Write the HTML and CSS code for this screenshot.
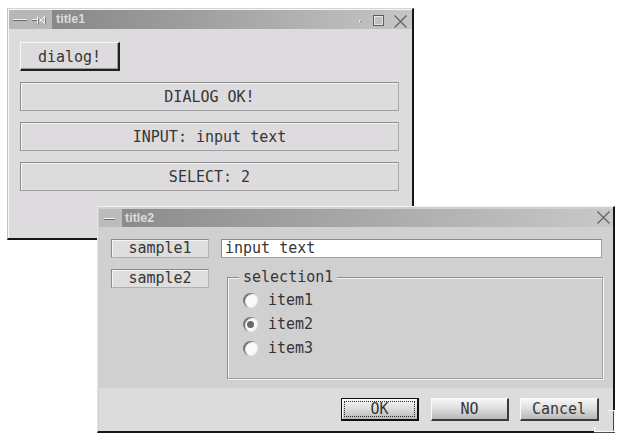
FILE: index.html
```html
<!DOCTYPE html>
<html>
<head>
<meta charset="utf-8">
<link rel="stylesheet" href="styles.css">
</head>
<body>
<div class="desk">
  <div class="win win1">
    <div class="titlebar">
      <div class="tb-icons tb-icons1">
        <svg width="43" height="19" viewBox="0 0 43 19">
          <path d="M4 10.5H18M23 10.5H28" stroke="#6a6a6a" stroke-width="1"/>
          <path d="M4 9.5H18M23 9.5H28" stroke="#f4f4f4" stroke-width="1"/>
          <path d="M28.5 6.5V13.5M35.5 6.5V13.5M28.5 6.5L35.5 13.5M28.5 13.5L35.5 6.5" stroke="#f2f2f2" stroke-width="1" fill="none"/>
          <path d="M29.5 7.5V14.5M36.5 7.5V14.5" stroke="#7a7a7a" stroke-width="1"/>
        </svg>
      </div>
      <div class="tb-title">
        <span class="tb-text">title1</span>
        <svg class="tb-right" width="56" height="19" viewBox="0 0 56 19">
          <rect x="3" y="10" width="2" height="2" fill="#f4f4f4"/>
          <rect x="4" y="11" width="1" height="1" fill="#666"/>
          <rect x="17.5" y="5.5" width="10" height="10" fill="none" stroke="#5c5c5c"/>
          <rect x="18.5" y="6.5" width="8" height="8" fill="none" stroke="#e6e6e6"/>
          <path d="M38.5 5.5L50.5 17.5M50.5 5.5L38.5 17.5" stroke="#5e5e5e" stroke-width="1.1"/>
        </svg>
      </div>
    </div>
    <div class="body1">
      <div class="btn-row"><div class="btn-raised">dialog!</div></div>
      <div class="label-box">DIALOG OK!</div>
      <div class="label-box">INPUT: input text</div>
      <div class="label-box">SELECT: 2</div>
    </div>
  </div>

  <div class="win win2">
    <div class="titlebar titlebar2">
      <div class="tb-icons tb-icons2">
        <svg width="23" height="18" viewBox="0 0 23 18">
          <path d="M5 10.5H16" stroke="#6a6a6a" stroke-width="1"/>
          <path d="M5 9.5H16" stroke="#f4f4f4" stroke-width="1"/>
        </svg>
      </div>
      <div class="tb-title tb-title2">
        <span class="tb-text">title2</span>
        <svg class="tb-right" width="20" height="18" viewBox="0 0 20 18">
          <path d="M4.5 2.5L16.5 14.5M16.5 2.5L4.5 14.5" stroke="#5e5e5e" stroke-width="1.1"/>
        </svg>
      </div>
    </div>
    <div class="main2">
      <div class="grid2">
        <div class="sample-btn">sample1</div>
        <div class="text-input">input text</div>
        <div class="sample-btn">sample2</div>
        <fieldset class="group">
          <legend class="group-label">selection1</legend>
          <div class="radio-row"><span class="radio"></span><span>item1</span></div>
          <div class="radio-row"><span class="radio checked"></span><span>item2</span></div>
          <div class="radio-row"><span class="radio"></span><span>item3</span></div>
        </fieldset>
      </div>
    </div>
    <div class="actions">
      <div class="push-btn default"><span class="focus">OK</span></div>
      <div class="push-btn">NO</div>
      <div class="push-btn cancel">Cancel</div>
    </div>
    <svg class="grip" width="22" height="24" viewBox="0 0 22 24">
      <path d="M14 0.5H20.5V21.5H0.5V17" stroke="#f8f8f8" stroke-width="1.4" fill="none"/>
    </svg>
  </div>
</div>
</body>
</html>
```

FILE: styles.css
```css
html, body {
  margin: 0;
  padding: 0;
  background: #ffffff;
}

.desk {
  position: relative;
  width: 627px;
  height: 444px;
  overflow: hidden;
  font-family: "DejaVu Sans Mono", "Liberation Mono", monospace;
  font-size: 15px;
  color: #363636;
}

.win {
  position: absolute;
  box-sizing: border-box;
  display: flex;
  flex-direction: column;
  border-right: 2px solid #161616;
  border-bottom: 2px solid #161616;
}

.win1 {
  left: 7px;
  top: 8px;
  width: 407px;
  height: 232px;
  padding: 1px 0 0 1px;
  border-left: 1px solid #c2c2c2;
  border-top: 1px solid #d4d4d4;
  background: #dddbdd;
  box-shadow: inset 1px 1px 0 #f6f6f6;
}

.win2 {
  left: 97px;
  top: 206px;
  width: 518px;
  height: 227px;
  padding: 2px 0 0 1px;
  border-left: 1px solid #e6e6e6;
  border-top: 1px solid #f0f0f0;
  background: #d0d0d0;
}

.titlebar {
  display: flex;
  height: 19px;
  flex: none;
}

.titlebar2 {
  height: 18px;
}

.tb-icons {
  flex: none;
  background: #b7b7b7;
  display: flex;
}

.tb-icons1 { width: 43px; }
.tb-icons2 { width: 23px; background: #bcbcbc; }

.tb-title {
  flex: 1;
  display: flex;
  align-items: center;
  background: linear-gradient(to right, #888888 0%, #a2a2a2 45%, #c6c6c6 100%);
}

.tb-title2 {
  background: linear-gradient(to right, #8c8c8c 0%, #a6a6a6 45%, #c8c8c8 100%);
}

.tb-text {
  font-family: "Liberation Sans", Arial, sans-serif;
  font-weight: bold;
  font-size: 12.5px;
  color: #dcdcdc;
  padding-left: 4px;
  line-height: 19px;
}

.tb-title2 .tb-text {
  padding-left: 3px;
  line-height: 18px;
}

.tb-right {
  margin-left: auto;
  display: block;
}

.body1 {
  display: flex;
  flex-direction: column;
  gap: 11px;
  padding: 13px 11px 0 11px;
}

.btn-row {
  display: flex;
}

.btn-raised {
  box-sizing: border-box;
  width: 100px;
  height: 29px;
  display: flex;
  align-items: center;
  justify-content: center;
  border-top: 1px solid #f8f8f8;
  border-left: 1px solid #f8f8f8;
  border-right: 2px solid #202020;
  border-bottom: 2px solid #202020;
  background: #dddbdd;
  box-shadow: inset -1px -1px 0 #9a9a9a;
  padding-top: 1px;
}

.label-box {
  box-sizing: border-box;
  width: 379px;
  height: 29px;
  display: flex;
  align-items: center;
  justify-content: center;
  border: 1px solid #8e8e8e;
  border-right-color: #a8a8a8;
  border-bottom-color: #a0a0a0;
  box-shadow: inset 1px 1px 0 #f4f4f4;
}

.main2 {
  height: 161px;
  box-sizing: border-box;
  padding: 12px 11px 0 12px;
  background: #d0d0d0;
}

.grid2 {
  display: grid;
  grid-template-columns: 98px 1fr;
  column-gap: 12px;
  row-gap: 11px;
  align-items: start;
}

.sample-btn {
  box-sizing: border-box;
  height: 19px;
  display: flex;
  align-items: center;
  justify-content: center;
  background: #dedede;
  border: 1px solid #8a8a8a;
  border-right-color: #b4b4b4;
  border-bottom-color: #b0b0b0;
  box-shadow: inset 1px 1px 0 #f6f6f6;
  line-height: 17px;
}

.text-input {
  box-sizing: border-box;
  height: 19px;
  background: #ffffff;
  border: 1px solid #8a8a8a;
  border-right-color: #a0a0a0;
  border-bottom-color: #a0a0a0;
  padding-left: 3px;
  line-height: 17px;
}

.group {
  margin: 0 -1px 0 6px;
  padding: 2px 0 18px 15px;
  height: 110px;
  box-sizing: border-box;
  border: 1px solid #8e8e8e;
  border-right-color: #a4a4a4;
  border-bottom-color: #9c9c9c;
  box-shadow: 1px 1px 0 #f4f4f4, inset 1px 1px 0 #f4f4f4;
  min-width: 0;
}

.group-label {
  margin-left: -4px;
  padding: 0 4px;
  line-height: 17px;
  background: #d0d0d0;
}

.radio-row {
  display: flex;
  align-items: center;
  gap: 10px;
  height: 24px;
}

.radio {
  box-sizing: border-box;
  width: 15px;
  height: 15px;
  border-radius: 50%;
  background: #fafafa;
  box-shadow: inset 2px 1px 1px #6e6e6e, inset -1px -1px 0 #e8e8e8;
  display: flex;
  align-items: center;
  justify-content: center;
  flex: none;
}

.radio.checked::after {
  content: "";
  width: 7px;
  height: 7px;
  border-radius: 50%;
  background: #686870;
}

.actions {
  flex: 1;
  display: flex;
  justify-content: flex-end;
  align-items: flex-start;
  gap: 11px;
  padding: 10px 14px 0 0;
  background: #dcdcdc;
}

.push-btn {
  box-sizing: border-box;
  width: 78px;
  height: 23px;
  display: flex;
  align-items: center;
  justify-content: center;
  background: linear-gradient(to bottom, #f6f6f6 0%, #e0e0e0 45%, #b8b8b8 100%);
  border-top: 1px solid #fbfbfb;
  border-left: 1px solid #fbfbfb;
  border-right: 2px solid #3a3a3a;
  border-bottom: 2px solid #3a3a3a;
}

.push-btn.default {
  margin-right: 1px;
  border: 1px solid #101010;
  border-right-width: 2px;
  border-bottom-width: 2px;
  padding: 2px;
  box-shadow: inset 1px 1px 0 #fafafa;
}

.push-btn.cancel {
  width: 79px;
}

.focus {
  box-sizing: border-box;
  width: 100%;
  height: 100%;
  display: flex;
  align-items: center;
  justify-content: center;
  border: 1px dotted #2a2a2a;
}

.grip {
  position: absolute;
  right: -3px;
  bottom: -3px;
}
```
